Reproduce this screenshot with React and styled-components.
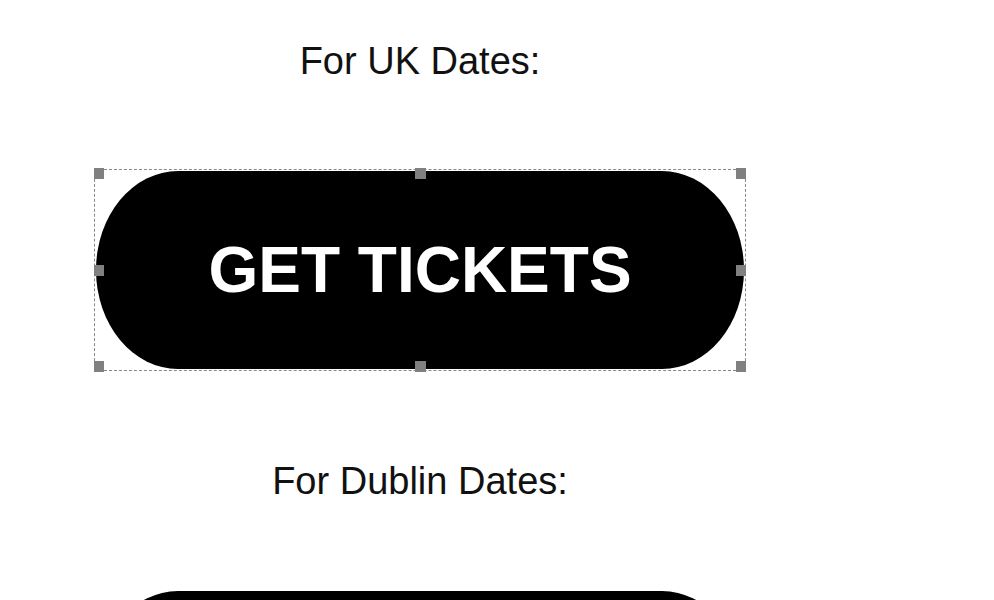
import React from 'react';
import styled, { createGlobalStyle } from 'styled-components';

const GlobalStyle = createGlobalStyle`
  html, body {
    margin: 0;
    padding: 0;
    background: #ffffff;
    font-family: "Liberation Sans", Arial, sans-serif;
  }
`

const dates = [
  { id: 'uk', label: 'For UK Dates:', selected: true },
  { id: 'dublin', label: 'For Dublin Dates:', selected: false },
];

export default function App() {
  return (
    <>
      <GlobalStyle />
      <Page>
        {dates.map((d) => (
          <TicketBlock key={d.id} label={d.label} selected={d.selected} />
        ))}
      </Page>
    </>
  )
}

function TicketBlock({ label, selected }) {
  return (
    <Block>
      <Label>{label}</Label>
      <Selection $selected={selected}>
        <TicketButton>GET TICKETS</TicketButton>
        {selected && (
          <>
            <Handle $x="left" $y="top" />
            <Handle $x="mid" $y="top" />
            <Handle $x="right" $y="top" />
            <Handle $x="left" $y="mid" />
            <Handle $x="right" $y="mid" />
            <Handle $x="left" $y="bottom" />
            <Handle $x="mid" $y="bottom" />
            <Handle $x="right" $y="bottom" />
          </>
        )}
      </Selection>
    </Block>
  )
}

const Page = styled.div`
  width: 652px;
  margin-left: 94px;
  padding-top: 40px;
  display: flex;
  flex-direction: column;
  gap: 89px;
  height: 600px;
  box-sizing: border-box;
  overflow: hidden;
`
const Block = styled.div`
  display: flex;
  flex-direction: column;
  align-items: center;
  gap: 87px;
`
const Label = styled.p`
  margin: 0;
  height: 42px;
  line-height: 42px;
  font-size: 38px;
  color: #111;
  text-align: center;
`
const Selection = styled.div`
  position: relative;
  width: 652px;
  box-sizing: border-box;
  padding: 1px;
  border: 1px dashed ${(p) => (p.$selected ? '#888888' : 'transparent')};
`
const TicketButton = styled.button`
  display: flex;
  align-items: center;
  justify-content: center;
  width: 100%;
  height: 198px;
  border: none;
  padding: 0;
  background: #000;
  color: #fff;
  border-radius: 82px / 50%;
  font-family: "Liberation Sans", Arial, sans-serif;
  font-weight: bold;
  font-size: 64px;
  cursor: pointer;
`
const Handle = styled.span`
  position: absolute;
  width: 11px;
  height: 11px;
  background: #808080;
  ${(p) => (p.$x === 'left' ? 'left: -2px;' : p.$x === 'right' ? 'right: -2px;' : 'left: calc(50% - 5px);')}
  ${(p) => (p.$y === 'top' ? 'top: -2px;' : p.$y === 'bottom' ? 'bottom: -2px;' : 'top: calc(50% - 5px);')}
`
